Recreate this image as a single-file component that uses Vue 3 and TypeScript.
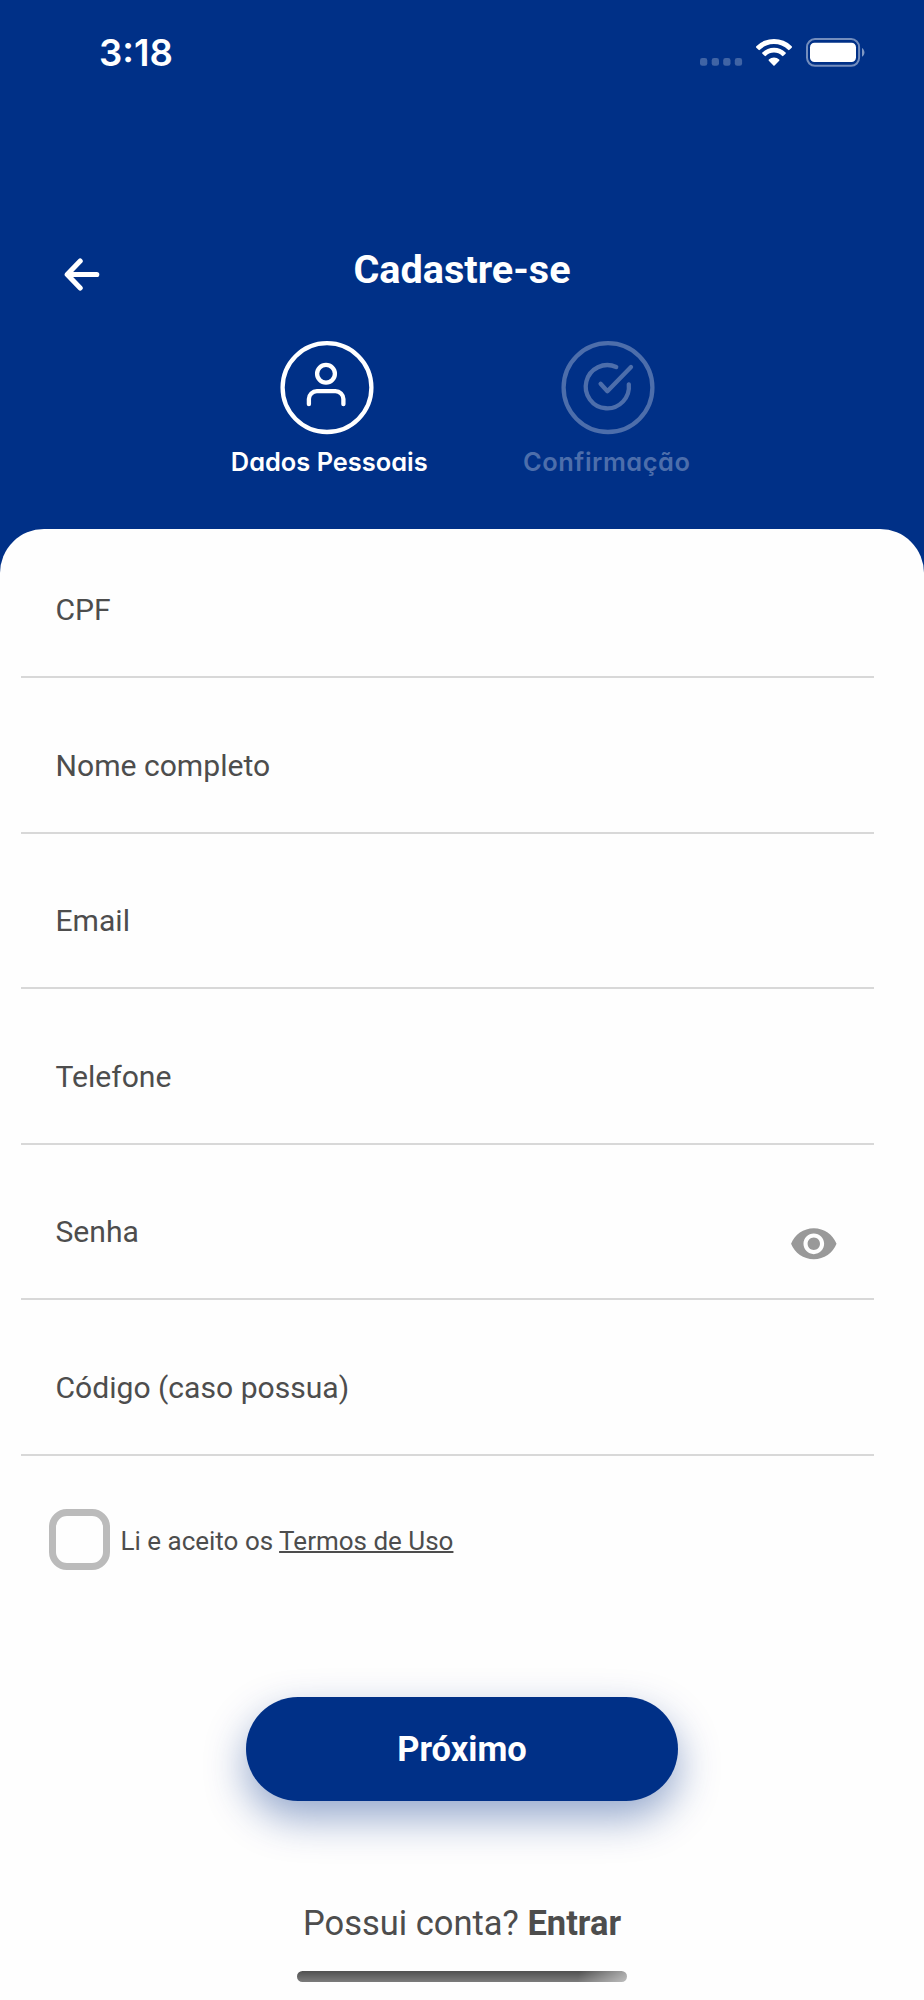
<script setup lang="ts">
interface Field {
  id: string
  label: string
  type: string
}

const fields: Field[] = [
  { id: 'cpf', label: 'CPF', type: 'text' },
  { id: 'nome', label: 'Nome completo', type: 'text' },
  { id: 'email', label: 'Email', type: 'email' },
  { id: 'telefone', label: 'Telefone', type: 'tel' },
  { id: 'senha', label: 'Senha', type: 'password' },
  { id: 'codigo', label: 'Código (caso possua)', type: 'text' },
]
</script>

<template>
  <main class="screen">
    <div class="status">
      <span class="time">3:18</span>
      <svg class="status-icons" width="170" height="40" viewBox="0 0 170 40">
        <g fill="#fff" fill-opacity=".25">
          <rect x="0" y="28" width="7.3" height="7.8" rx="2.4" />
          <rect x="11.7" y="28" width="7.3" height="7.8" rx="2.4" />
          <rect x="23.2" y="28" width="7.3" height="7.8" rx="2.4" />
          <rect x="34.8" y="28" width="7.3" height="7.8" rx="2.4" />
        </g>
        <g fill="#fff">
          <path d="M56.3 16.2 A25.3 25.3 0 0 1 91.7 16.2 Q92.4 17 91.7 17.7 L89.5 19.8 Q88.8 20.5 88.1 19.8 A20.2 20.2 0 0 0 59.9 19.8 Q59.2 20.5 58.5 19.8 L56.3 17.7 Q55.6 17 56.3 16.2Z" />
          <path d="M62.4 22.4 A16.5 16.5 0 0 1 85.6 22.4 Q86.2 23.1 85.6 23.7 L83.4 25.8 Q82.7 26.5 82 25.8 A11.5 11.5 0 0 0 66 25.8 Q65.3 26.5 64.6 25.8 L62.4 23.7 Q61.8 23.1 62.4 22.4Z" />
          <path d="M68.8 29.6 A7.6 7.6 0 0 1 79.2 29.6 Q79.7 30.2 79.2 30.8 L74.6 35.4 Q74 36 73.4 35.4 L68.8 30.8 Q68.3 30.2 68.8 29.6Z" />
        </g>
        <rect x="107" y="9.1" width="52.1" height="26.7" rx="8" fill="none" stroke="#fff" stroke-opacity=".45" stroke-width="2" />
        <rect x="110" y="12.7" width="46" height="19.3" rx="4.5" fill="#fff" />
        <path d="M162 18 A5.2 5.2 0 0 1 162 26.8Z" fill="#fff" fill-opacity=".5" />
      </svg>
    </div>

    <header class="header">
      <svg class="back" width="38" height="36" viewBox="0 0 38 36" fill="none" stroke="#fff" stroke-width="5.1" stroke-linecap="round" stroke-linejoin="round">
        <path d="M32.8 17.5H3.6M16.2 4L3.2 17.5L16.2 31" />
      </svg>
      <h1 class="title">Cadastre-se</h1>
    </header>

    <nav class="steps">
      <div class="step">
        <svg width="94" height="94" viewBox="0 0 94 94" fill="none" stroke="#fff" stroke-width="4.3">
          <circle cx="47" cy="46.6" r="44.4" />
          <circle cx="46" cy="32.7" r="8.9" />
          <path d="M28.9 63.2V58A8 8 0 0 1 36.9 50.1H55.4A8 8 0 0 1 63.4 58V63.2" stroke-linecap="round" />
        </svg>
        <span class="step-label personal">Dados Pessoais</span>
      </div>
      <div class="step inactive">
        <svg width="94" height="94" viewBox="0 0 94 94" fill="none" stroke="#4d6eab" stroke-width="4.3">
          <circle cx="47" cy="46.6" r="44.4" />
          <path d="M55.2 26A21.6 21.6 0 1 0 67.8 43.3" stroke-linecap="round" />
          <path d="M39.6 42.8L46.4 50.2L70 26.1" stroke-linecap="round" stroke-linejoin="round" />
        </svg>
        <span class="step-label confirm">Confirmação</span>
      </div>
    </nav>

    <section class="panel">
      <div v-for="field in fields" :key="field.id" class="field">
        <span class="label">{{ field.label }}</span>
        <svg v-if="field.type === 'password'" class="eye" width="49.6" height="49.6" viewBox="0 0 24 24" fill="#999">
          <path d="M12 4.5C7 4.5 2.73 7.61 1 12c1.73 4.39 6 7.5 11 7.5s9.27-3.11 11-7.5c-1.73-4.39-6-7.5-11-7.5zM12 17c-2.76 0-5-2.24-5-5s2.24-5 5-5 5 2.24 5 5-2.24 5-5 5zm0-8c-1.66 0-3 1.34-3 3s1.34 3 3 3 3-1.34 3-3-1.34-3-3-3z" />
        </svg>
      </div>

      <div class="terms">
        <span class="checkbox" role="checkbox" aria-checked="false"></span>
        <span class="terms-text">Li e aceito os <a class="link">Termos de Uso</a></span>
      </div>

      <button class="next" type="button">Próximo</button>
      <p class="login">Possui conta? <b>Entrar</b></p>
      <div class="home"></div>
    </section>
  </main>
</template>

<style>
body {
  margin: 0;
  background: #003087;
}
</style>

<style scoped>
.screen {
  width: 924px;
  height: 2000px;
  overflow: hidden;
  display: flex;
  flex-direction: column;
  background: #003087;
  color: #4d4d4d;
  font-family: Roboto, "Liberation Sans", sans-serif;
}
.status {
  box-sizing: border-box;
  height: 240px;
  padding: 30px 54px 0 99px;
  display: flex;
  justify-content: space-between;
  align-items: flex-start;
  color: #fff;
}
.time {
  font: 600 36.6px/46px Inter, sans-serif;
}
.status-icons {
  display: block;
}
.header {
  height: 101px;
  display: grid;
  grid-template-columns: 110px 1fr 110px;
  align-items: start;
  color: #fff;
}
.back {
  display: block;
  margin: 17px 0 0 64px;
}
.title {
  margin: 0;
  font-size: 39.6px;
  line-height: 60px;
  font-weight: 700;
  text-align: center;
}
.steps {
  height: 188px;
  display: flex;
}
.step {
  width: 280.5px;
  display: flex;
  flex-direction: column;
  align-items: center;
  color: #fff;
}
.step:first-child {
  margin-left: 187px;
}
.inactive {
  color: #4d6eab;
}
.step-label {
  font: 600 25.4px/34px Inter, sans-serif;
  font-feature-settings: "cv11";
  margin-top: 10px;
  white-space: nowrap;
}
.personal {
  margin-left: 4px;
}
.confirm {
  margin-right: 2px;
  letter-spacing: 0.55px;
}
.panel {
  box-sizing: border-box;
  flex: 1;
  background: #fefefe;
  border-radius: 44px 44px 0 0;
  display: flex;
  flex-direction: column;
}
.field {
  box-sizing: border-box;
  height: 155.5px;
  margin: 0 50px 0 21px;
  padding: 67.5px 35px 0 34.5px;
  border-bottom: 2px solid #d8d8d8;
  display: flex;
  justify-content: space-between;
  flex: none;
}
.field:first-child {
  height: 149px;
  padding-top: 61px;
}
.label {
  font-size: 30.1px;
  line-height: 40px;
  white-space: nowrap;
}
.eye {
  margin: 7px 0 0;
}
.terms {
  display: flex;
  align-items: center;
  margin: 54px 0 0 49px;
  height: 60px;
}
.checkbox {
  box-sizing: border-box;
  width: 60.5px;
  height: 60.5px;
  border: 7px solid #bbb;
  border-radius: 18px;
}
.terms-text {
  margin: 2px 0 0 11px;
  font-size: 26px;
  white-space: nowrap;
}
.link {
  text-decoration: underline;
  text-decoration-thickness: 2px;
}
.next {
  width: 432px;
  height: 104px;
  margin: 127.5px auto 0;
  padding: 0;
  border: 0;
  border-radius: 52px;
  background: #003087;
  box-shadow: 0 17px 42px rgba(0, 48, 135, 0.42);
  color: #fff;
  font: 700 34.5px/103px Roboto, sans-serif;
}
.login {
  margin: 98px 0 0;
  font-size: 34.5px;
  line-height: 48px;
  text-align: center;
}
.home {
  width: 330px;
  height: 11px;
  margin: 24px 0 0 297px;
  border-radius: 6px;
  background: linear-gradient(100deg, transparent 85%, rgba(255, 255, 255, 0.5)), linear-gradient(#505050, #7c7c7c);
}
</style>
